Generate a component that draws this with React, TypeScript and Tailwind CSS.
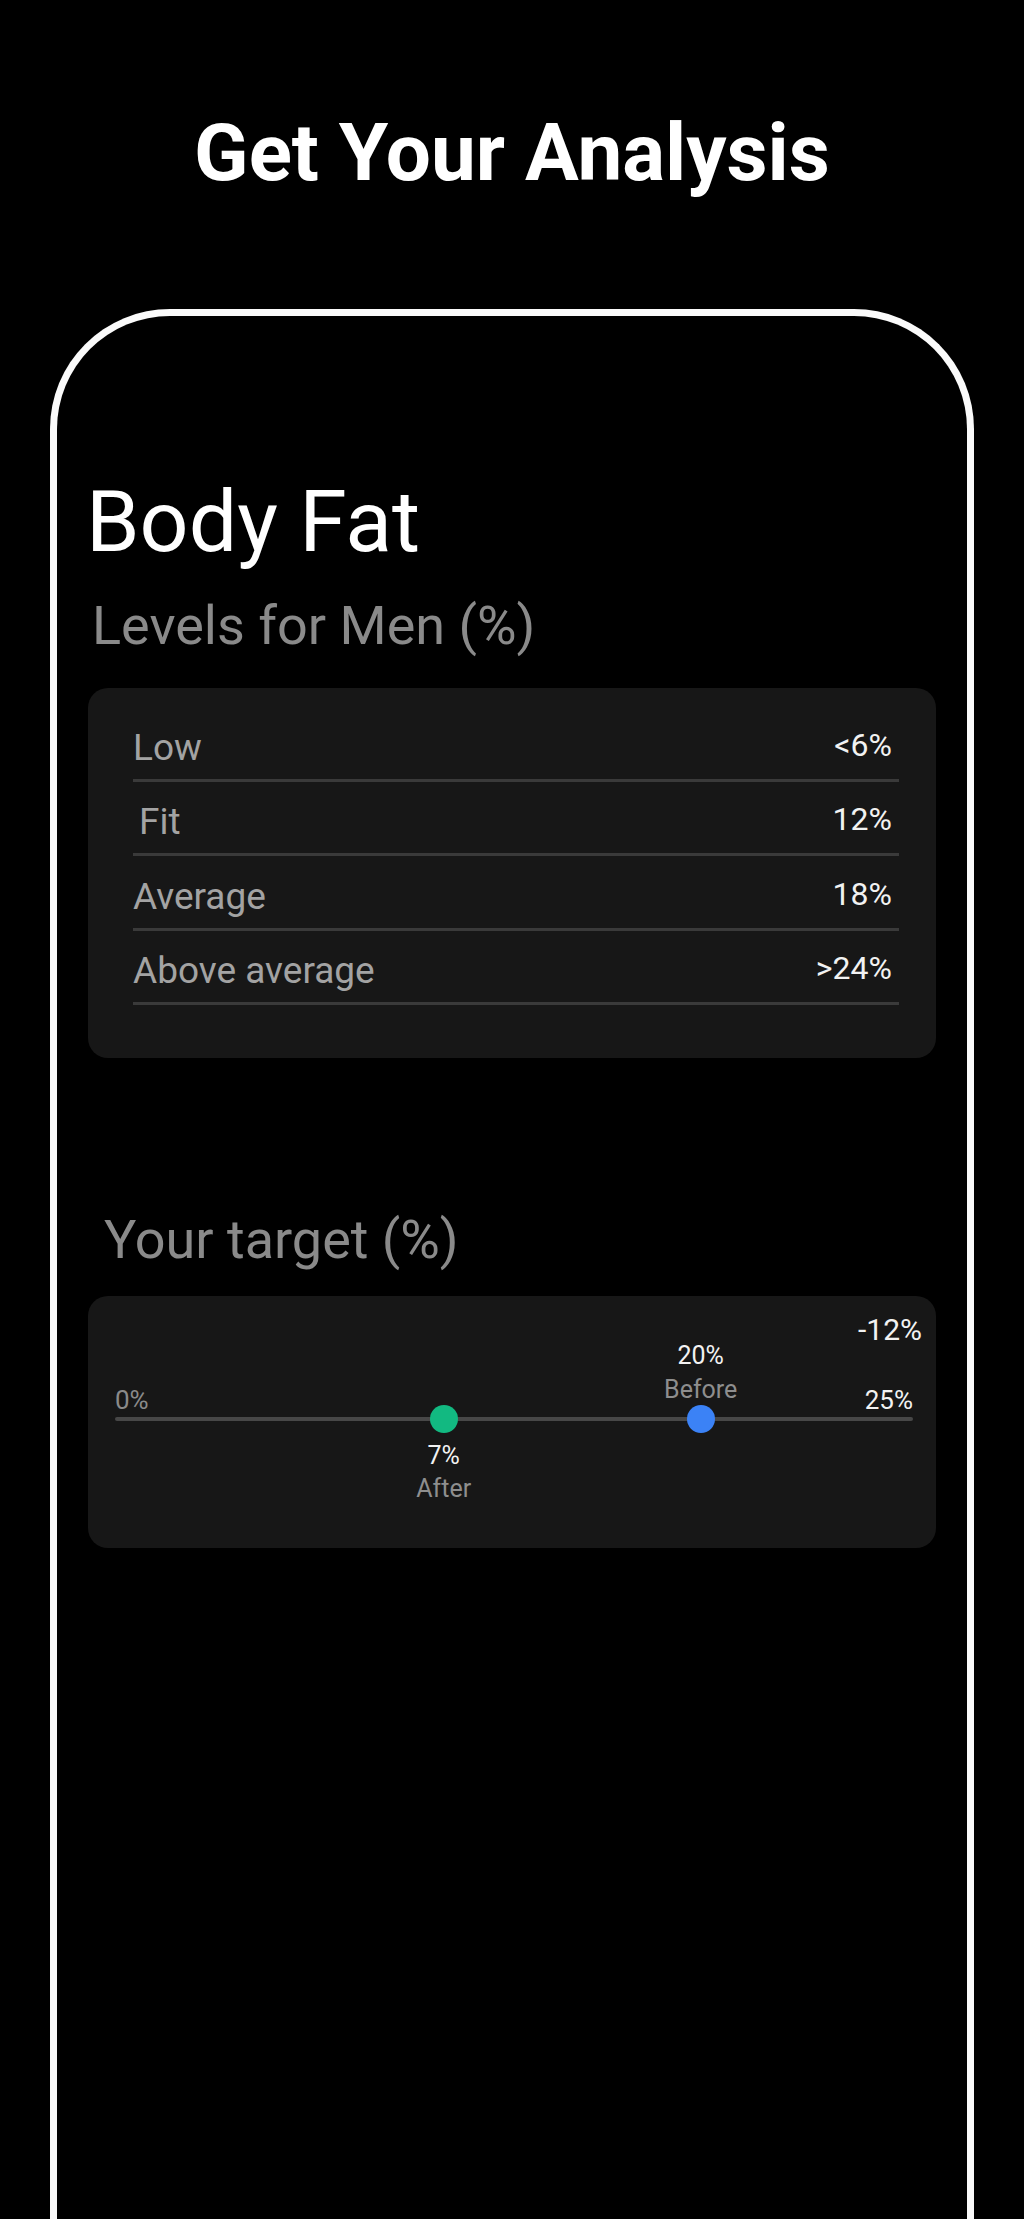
const LEVELS = [
  { label: "Low", value: "<6%", indent: false },
  { label: "Fit", value: "12%", indent: true },
  { label: "Average", value: "18%", indent: false },
  { label: "Above average", value: ">24%", indent: false },
];

function LevelRow({ label, value, indent }: { label: string; value: string; indent: boolean }) {
  return (
    <div className="flex items-start justify-between border-b-[3px] border-[#3a3a3a] pb-[13px] pt-[21.5px]">
      <span className={`text-[37px] leading-none text-[#a3a3a3] ${indent ? "pl-[6px]" : ""}`}>{label}</span>
      <span className="pr-[7px] text-[32px] leading-none text-[#f2f2f2]">{value}</span>
    </div>
  );
}

function TargetCard() {
  return (
    <div className="mt-[29.5px] h-[252px] rounded-[20px] bg-[#171717] pl-[27px] pr-[14px] pt-[19px]">
      <div className="text-right text-[30px] leading-none text-[#f2f2f2]">-12%</div>
      <div className="mr-[9px] mt-[42px]">
        <div className="flex justify-between text-[26px] leading-none">
          <span className="text-[#8a8a8a]">0%</span>
          <span className="text-[#f2f2f2]">25%</span>
        </div>
        {/* track with before / after markers */}
        <div className="relative mt-[4px] h-[4px] rounded-full bg-[#474747]">
          <div className="absolute bottom-[19px] left-[73.4%] flex -translate-x-1/2 flex-col items-center text-[25px] leading-none">
            <span className="text-[#f2f2f2]">20%</span>
            <span className="mt-[9px] text-[#8e8e8e]">Before</span>
          </div>
          <div className="absolute left-[73.4%] top-1/2 h-[28px] w-[28px] -translate-x-1/2 -translate-y-1/2 rounded-full bg-[#3b82f6]" />

          <div className="absolute left-[41.2%] top-1/2 h-[28px] w-[28px] -translate-x-1/2 -translate-y-1/2 rounded-full bg-[#12b981]" />
          <div className="absolute left-[41.2%] top-[26px] flex -translate-x-1/2 flex-col items-center text-[25px] leading-none">
            <span className="text-[#f2f2f2]">7%</span>
            <span className="mt-[8px] text-[#8e8e8e]">After</span>
          </div>
        </div>
      </div>
    </div>
  );
}

export default function App() {
  return (
    <div className="h-[2219px] overflow-hidden bg-black pt-[113px] font-['Roboto',sans-serif]">
      <h1 className="text-center text-[80px] font-bold leading-none text-white">Get Your Analysis</h1>

      <div className="mx-[50px] mt-[116px] h-[1930px] rounded-t-[120px] border-[7px] border-b-0 border-[#fafafa] px-[31px]">
        <h2 className="-ml-[2px] mt-[163px] text-[86px] font-normal leading-none text-white">Body Fat</h2>
        <p className="ml-[4px] mt-[34px] text-[54px] leading-none text-[#8a8a8a]">Levels for Men (%)</p>

        <div className="mt-[34.5px] rounded-[20px] bg-[#171717] pb-[53px] pl-[45px] pr-[37px] pt-[19.5px]">
          {LEVELS.map((row) => (
            <LevelRow key={row.label} {...row} />
          ))}
        </div>

        <p className="ml-[16px] mt-[154.5px] text-[54px] leading-none text-[#8a8a8a]">Your target (%)</p>
        <TargetCard />
      </div>
    </div>
  );
}
